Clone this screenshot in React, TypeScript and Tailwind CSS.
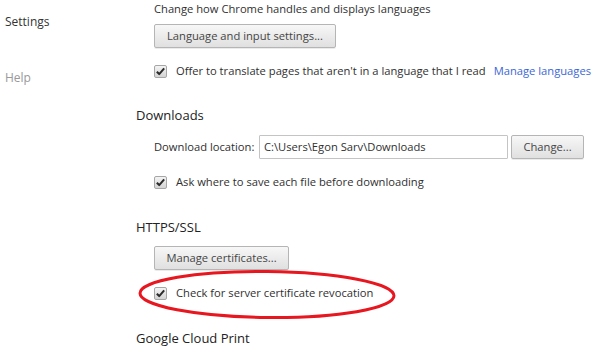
import React from 'react';

const font = { fontFamily: '"Open Sans", "Noto Sans", sans-serif' };

const Checkbox: React.FC = () => (
  <span className="relative inline-flex h-[13px] w-[13px] shrink-0 items-center justify-center rounded-[2px] border border-[#a6a6a6] bg-gradient-to-b from-[#f4f4f4] to-[#d4d4d4]">
    <svg viewBox="0 0 12 12" className="h-[11px] w-[11px]">
      <path d="M2 6.2 L4.6 8.8 L10 2.6" fill="none" stroke="#2b2b2b" strokeWidth="2.2" strokeLinejoin="round" />
    </svg>
  </span>
);

const Button: React.FC<{ label: string; w: string }> = ({ label, w }) => (
  <div
    className={`${w} flex h-[24px] items-center justify-center rounded-[2px] border border-[#b5b5b5] bg-gradient-to-b from-[#f7f7f7] to-[#e0e0e0] text-[11.2px] text-[#454545] shadow-[0_1px_0_rgba(0,0,0,0.08)]`}
  >
    {label}
  </div>
);

const CheckRow: React.FC<{ children: React.ReactNode; className?: string }> = ({ children, className }) => (
  <div className={`flex h-[18px] items-center pl-[18px] ${className ?? ''}`}>
    <Checkbox />
    <span className="ml-[9px] whitespace-nowrap">{children}</span>
  </div>
);

const Header: React.FC<{ children: React.ReactNode; className?: string }> = ({ children, className }) => (
  <div className={`flex h-[20px] items-center text-[13px] text-[#222] ${className ?? ''}`}>{children}</div>
);

export default function App() {
  return (
    <div className="relative flex h-[356px] w-[616px] overflow-hidden bg-white text-[11.2px] text-[#303030]" style={font}>
      <div className="w-[136px] shrink-0 pl-[5px]">
        <div className="mt-[13px] h-[18px] text-[12px] text-[#333]">Settings</div>
        <div className="mt-[38px] h-[18px] text-[12px] text-[#999]">Help</div>
      </div>

      <div className="flex flex-col">
        <div className="flex h-[18px] items-center pl-[18px]">Change how Chrome handles and displays languages</div>
        <div className="mt-[6px] pl-[18px]">
          <Button label="Language and input settings..." w="w-[182px]" />
        </div>
        <CheckRow className="mt-[14px]">
          Offer to translate pages that aren't in a language that I read
          <span className="ml-[8px] text-[#3b67d6]">Manage languages</span>
        </CheckRow>

        <Header className="mt-[26px]">Downloads</Header>
        <div className="mt-[9px] flex h-[24px] items-center pl-[18px]">
          <span className="w-[105px] whitespace-nowrap">Download location:</span>
          <div className="flex h-[24px] w-[249px] items-center rounded-[1px] border border-[#c4c4c4] bg-white pl-[4px]">
            C:\Users\Egon Sarv\Downloads
          </div>
          <div className="ml-[3px]">
            <Button label="Change..." w="w-[73px]" />
          </div>
        </div>
        <CheckRow className="mt-[14px]">Ask where to save each file before downloading</CheckRow>

        <Header className="mt-[27px]">HTTPS/SSL</Header>
        <div className="mt-[8px] pl-[18px]">
          <Button label="Manage certificates..." w="w-[135px]" />
        </div>
        <CheckRow className="mt-[14px]">Check for server certificate revocation</CheckRow>

        <Header className="mt-[27px]">Google Cloud Print</Header>
      </div>

      <svg className="pointer-events-none absolute left-0 top-0" width="616" height="356">
        <ellipse cx="267" cy="294.5" rx="127" ry="23" fill="none" stroke="#e8161f" strokeWidth="3" transform="rotate(0.6 267 294.5)" />
      </svg>
    </div>
  );
}
